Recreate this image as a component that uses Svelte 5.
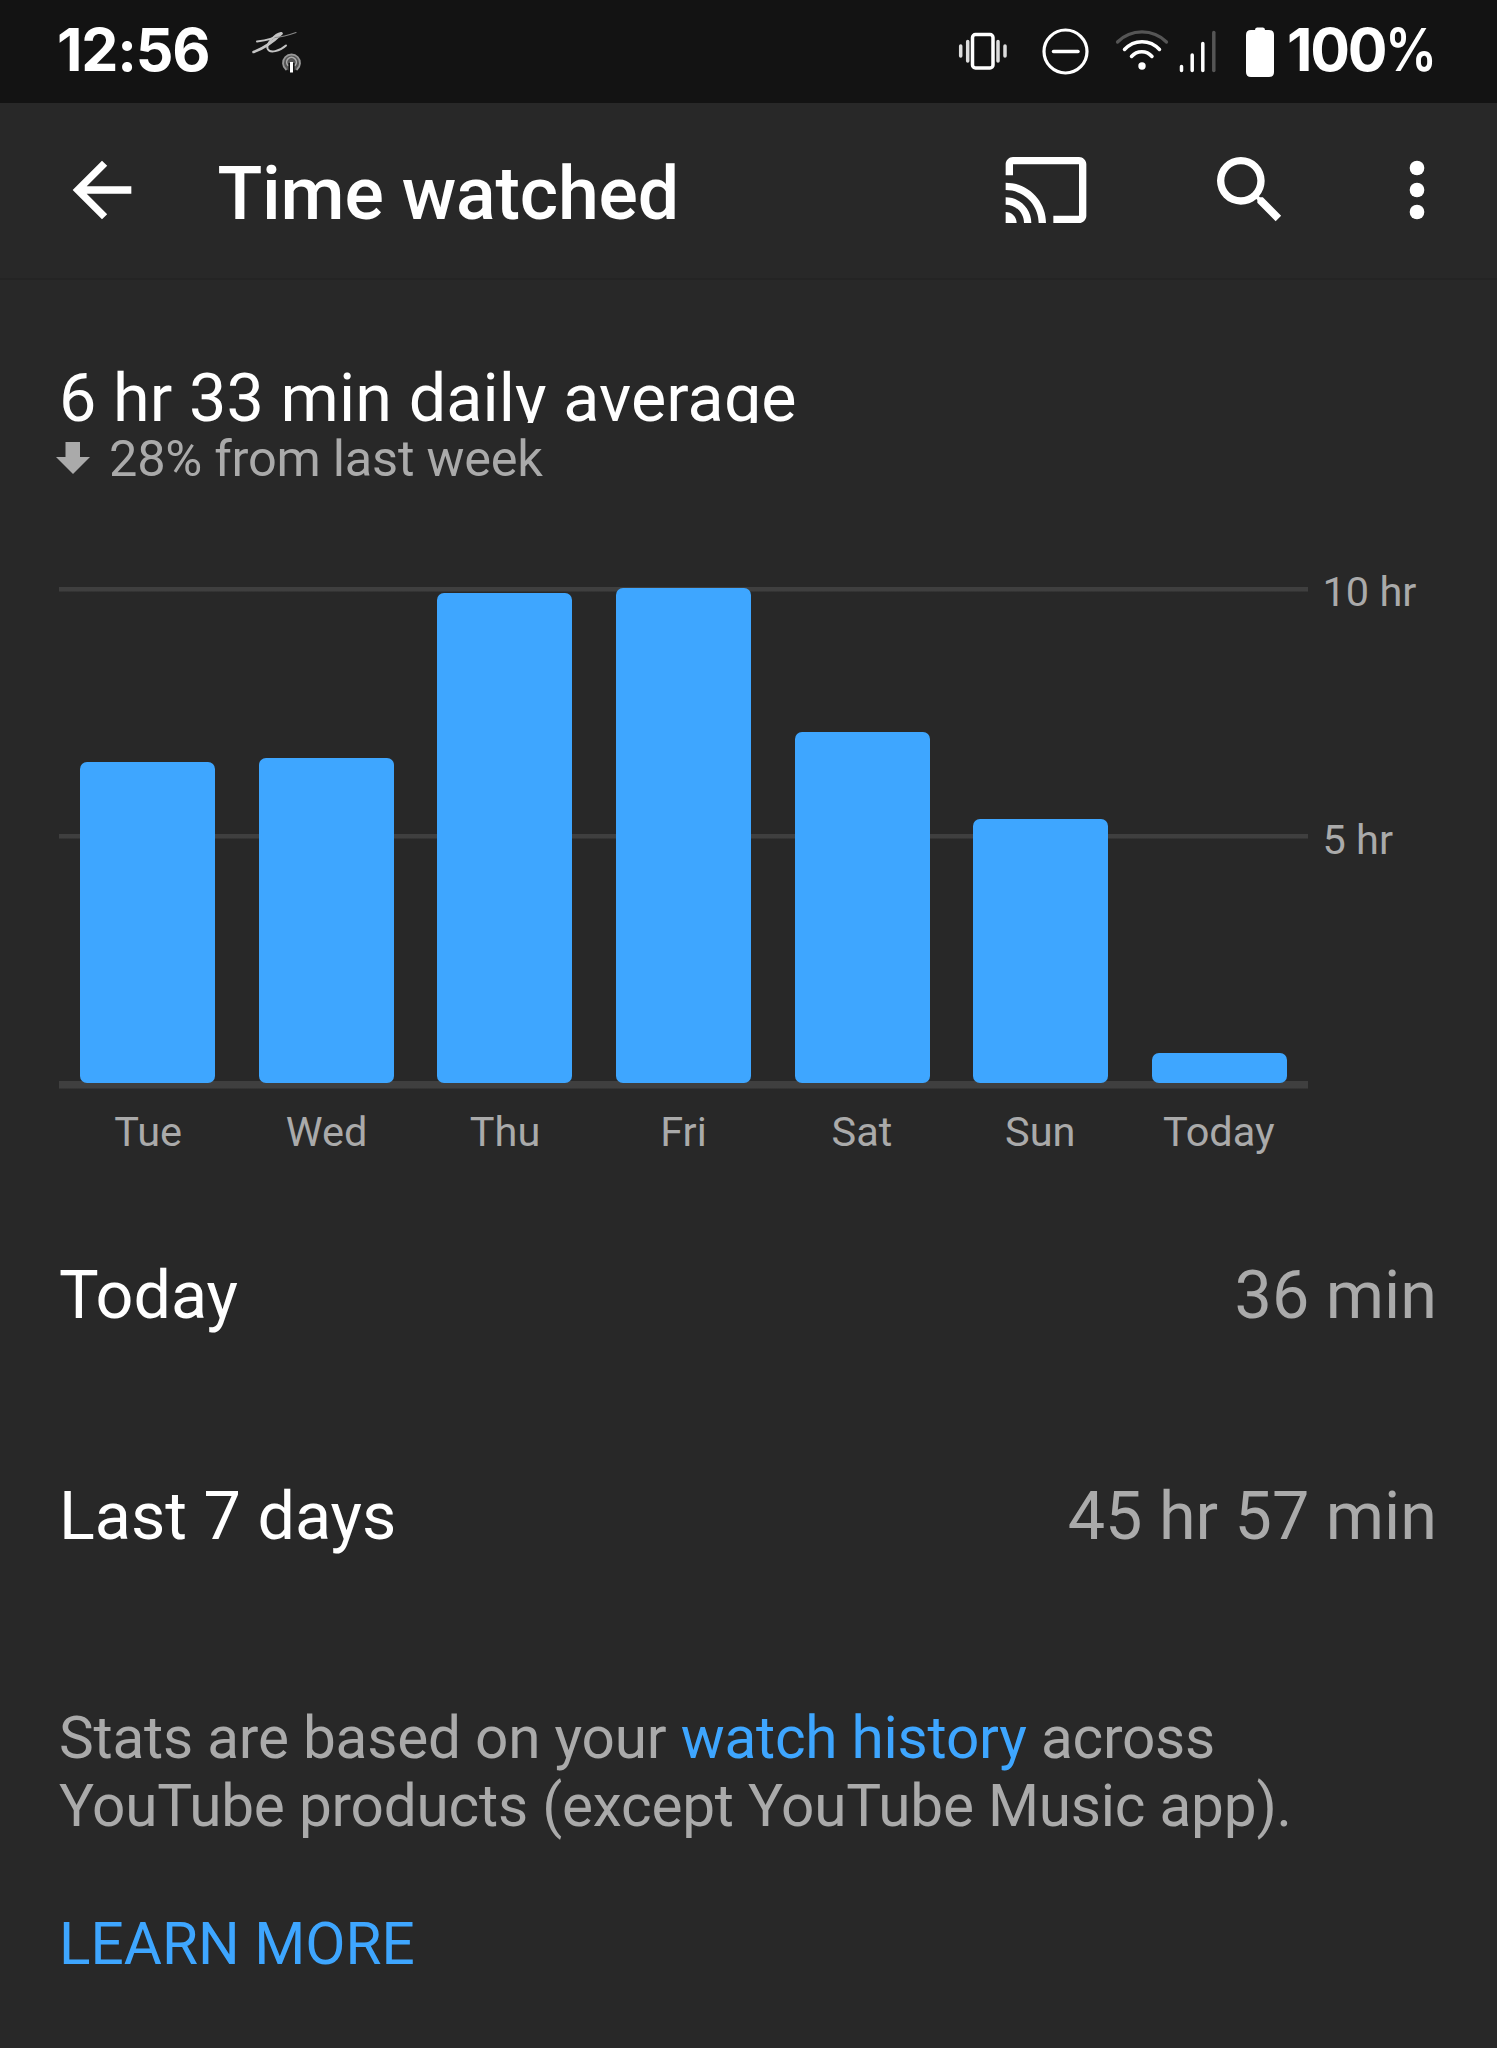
<script>
  const days = [
    { label: 'Tue', height: 320.5 },
    { label: 'Wed', height: 325 },
    { label: 'Thu', height: 490 },
    { label: 'Fri', height: 495 },
    { label: 'Sat', height: 351 },
    { label: 'Sun', height: 264 },
    { label: 'Today', height: 30 }
  ];

  const totals = [
    { label: 'Today', value: '36 min' },
    { label: 'Last 7 days', value: '45 hr 57 min' }
  ];
</script>

<div class="screen">
  <div class="status-bar">
    <span class="clock">12:56</span>
    <svg class="notification" viewBox="0 0 75 60" width="75" height="60" fill="none" stroke-linecap="round">
      <g stroke="#c4c4c4">
        <path d="M17 21.5C26 20.500 35 18 41 14" stroke-width="2" />
        <path d="M13.500 32C22 29 33 22 41.500 13.500" stroke-width="2.600" />
        <path d="M41 13C35 14 26 24 27.500 28.500C29.500 34 40 31 46 25.500" stroke-width="2" />
        <path d="M35 17.500C43 17 49 15 56 12.500" stroke-width="1.200" stroke="#888" />
      </g>
      <circle cx="51.500" cy="43" r="8" fill="#555" />
      <path d="M46 49.500A8.500 8.500 0 1 1 57 49.500" stroke="#999" stroke-width="1.800" />
      <path d="M48 45.500A4.800 4.800 0 1 1 55 45.500" stroke="#aaa" stroke-width="1.600" />
      <path d="M51.500 43V53" stroke="#131313" stroke-width="6" stroke-linecap="butt" />
      <path d="M51.500 42V52.500" stroke="#fff" stroke-width="3" stroke-linecap="butt" />
    </svg>
    <svg class="status-icons" viewBox="0 0 310 62" width="310" height="62" fill="none" stroke="#fff" stroke-linecap="round">
      <rect x="22.500" y="14.500" width="20.500" height="33.500" rx="3" stroke-width="3.500" />
      <path d="M17.700 21.500V41M48 21.500V41M10.700 26V36M55 26V36" stroke="#ddd" stroke-width="3.500" />
      <circle cx="115.500" cy="31.500" r="21.500" stroke-width="3.200" />
      <path d="M103.500 31.500H128" stroke-width="3.500" />
      <path d="M167.500 22C181 8.500 203 8.500 216.500 22" stroke="#555" stroke-width="3.200" />
      <path d="M174.500 29.500C184 19 200 19 209.500 29.500" stroke-width="3.500" />
      <path d="M181.500 36.500C187 30 196.500 30 202 36.500" stroke-width="3.500" />
      <circle cx="192" cy="46" r="3.700" fill="#fff" stroke="none" />
      <path d="M231.500 46.500V50.500M242.200 35V50.500M252.800 23.500V50.500" stroke-width="3.500" />
      <path d="M263.800 12.500V50.500" stroke="#555" stroke-width="3.500" />
    </svg>
    <svg class="battery" viewBox="0 0 28 50" width="28" height="50" fill="#fff">
      <path d="M9 3Q9 .5 11 .5H17Q19 .5 19 3H23Q28 3 28 8V45Q28 50 23 50H5Q0 50 0 45V8Q0 3 5 3Z" />
    </svg>
    <span class="percent">100<span class="sign">%</span></span>
  </div>

  <header class="app-bar">
    <svg class="icon back" viewBox="0 0 24 24"><path d="M20 11H7.83l5.59-5.59L12 4l-8 8 8 8 1.410-1.410L7.830 13H20v-2z" /></svg>
    <h1>Time watched</h1>
    <svg class="icon cast" viewBox="0 0 24 24"><path d="M21 3H3c-1.100 0-2 .900-2 2v3h2V5h18v14h-7v2h7c1.100 0 2-.900 2-2V5c0-1.100-.900-2-2-2zM1 18v3h3c0-1.660-1.340-3-3-3zm0-4v2c2.760 0 5 2.240 5 5h2c0-3.870-3.130-7-7-7zm0-4v2c4.970 0 9 4.030 9 9h2c0-6.080-4.930-11-11-11z" /></svg>
    <svg class="icon search" viewBox="0 0 24 24"><path d="M15.5 14h-.79l-.28-.27A6.471 6.471 0 0 0 16 9.500 6.500 6.500 0 1 0 9.500 16c1.610 0 3.090-.59 4.230-1.570l.27.28v.79l5 4.990L20.490 19l-4.990-5zm-6 0C7.010 14 5 11.990 5 9.500S7.010 5 9.500 5 14 7.010 14 9.500 11.990 14 9.500 14z" /></svg>
    <svg class="icon more" viewBox="0 0 24 24"><circle cx="12" cy="6" r="2" /><circle cx="12" cy="12" r="2" /><circle cx="12" cy="18" r="2" /></svg>
  </header>

  <main>
    <h2>6 hr 33 min daily average</h2>
    <div class="trend">
      <svg viewBox="0 0 34 32" width="34" height="32"><path d="M9.500 0H24V15H34L17 32L0 15H9.500Z" fill="#aaa" /></svg>
      <span>28% from last week</span>
    </div>

    <div class="chart">
      <div class="plot">
        <div class="bars">
          {#each days as day}
            <div class="bar" style="height: {day.height}px"></div>
          {/each}
        </div>
      </div>
      <div class="scale">
        <span>10 hr</span>
        <span>5 hr</span>
      </div>
    </div>
    <div class="days">
      {#each days as day}
        <span>{day.label}</span>
      {/each}
    </div>

    <div class="totals">
      {#each totals as total}
        <div class="row">
          <span>{total.label}</span>
          <span class="value">{total.value}</span>
        </div>
      {/each}
    </div>

    <p class="note">
      Stats are based on your <span class="link">watch history</span> across<br />
      YouTube products (except YouTube Music app).
    </p>
    <span class="learn">LEARN MORE</span>
  </main>
</div>

<style>
  :global(body) {
    margin: 0;
    background: #282828;
  }

  .screen {
    width: 1497px;
    height: 2048px;
    overflow: hidden;
    background: #282828;
    color: #fff;
    font-family: Roboto, sans-serif;
    white-space: nowrap;
  }

  .status-bar {
    height: 102.5px;
    box-sizing: border-box;
    padding-top: 20px;
    display: flex;
    align-items: flex-start;
    background: #131313;
    font-family: Inter, sans-serif;
    font-size: 59px;
    font-weight: 700;
    line-height: 60px;
  }

  .clock {
    width: 183px;
    margin-left: 57px;
    letter-spacing: -1.2px;
  }

  .status-icons {
    margin-left: 635px;
  }

  .battery {
    margin: 7px 0 0 -14px;
  }

  .percent {
    margin-left: 13px;
    letter-spacing: -2.200px;
  }

  .sign {
    display: inline-block;
    font-weight: 600;
    transform: scaleX(0.88);
    transform-origin: left;
  }

  .app-bar {
    height: 177px;
    box-sizing: border-box;
    border-bottom: 2px solid #242424;
    display: flex;
    align-items: center;
  }

  .icon {
    width: 88px;
    height: 88px;
    flex-shrink: 0;
    fill: #fff;
  }

  .back {
    margin-left: 58px;
  }

  h1 {
    width: 784px;
    margin: 7px 0 0 71.500px;
    font-size: 73.500px;
    font-weight: 500;
    line-height: 86px;
    letter-spacing: -0.200px;
  }

  .search {
    margin-left: 116px;
  }

  .more {
    margin-left: 79px;
  }

  main {
    padding: 80.500px 60px 0 59px;
  }

  h2 {
    height: 63px;
    margin: 0;
    overflow: hidden;
    font-size: 66.500px;
    font-weight: 400;
    line-height: 76px;
    letter-spacing: 0.100px;
  }

  .trend {
    height: 70px;
    display: flex;
    align-items: center;
    color: #aaa;
    font-size: 50.500px;
    line-height: 60px;
    letter-spacing: -0.250px;
  }

  .trend svg {
    margin: 0 19px 0 -3px;
  }

  .trend span {
    padding-top: 2px;
  }

  .chart {
    margin-top: 94px;
    height: 501.500px;
    display: flex;
  }

  .plot {
    width: 1249px;
    display: flex;
    align-items: flex-end;
    background:
      linear-gradient(#3f3f3f, #3f3f3f) 0 0 / 100% 4.500px no-repeat,
      linear-gradient(#3f3f3f, #3f3f3f) 0 247px / 100% 4.500px no-repeat,
      linear-gradient(#3f3f3f, #3f3f3f) 0 100% / 100% 7.500px no-repeat;
  }

  .bars {
    flex: 1;
    padding: 0 21px 6px;
    display: flex;
    align-items: flex-end;
    justify-content: space-between;
  }

  .bar {
    width: 135px;
    border-radius: 7px;
    background: #3ea6ff;
  }

  .scale {
    margin: -20px 0 0 14.500px;
    display: flex;
    flex-direction: column;
    gap: 197.500px;
    color: #aaa;
    font-size: 41.500px;
    line-height: 50px;
  }

  .days {
    width: 1249px;
    margin-top: 18.500px;
    display: flex;
    color: #aaa;
    font-size: 41.500px;
    line-height: 50px;
  }

  .days span {
    flex: 1 1 0;
    text-align: center;
  }

  .totals {
    margin-top: 98px;
  }

  .row {
    height: 80px;
    margin-bottom: 140.500px;
    display: flex;
    justify-content: space-between;
    font-size: 66.500px;
    line-height: 80px;
  }

  .value,
  .note {
    color: #aaa;
  }

  .note {
    margin: 148px 0 0;
    font-size: 58.500px;
    line-height: 68.500px;
    letter-spacing: -0.220px;
  }

  .link,
  .learn {
    color: #3ea6ff;
  }

  .learn {
    display: block;
    margin-top: 68px;
    font-size: 58.500px;
    line-height: 70px;
  }
</style>
